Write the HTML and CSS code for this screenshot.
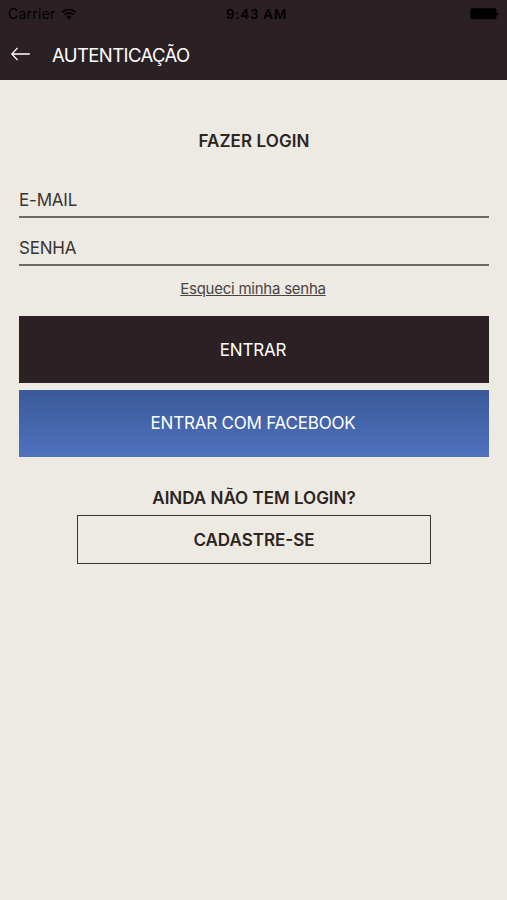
FILE: index.html
```html
<!DOCTYPE html>
<html lang="pt-BR">
<head>
    <meta charset="UTF-8">
    <meta name="viewport" content="width=device-width, initial-scale=1.0">
    <title>Autenticação</title>
    <link rel="stylesheet" href="styles.css">
</head>
<body>
    <header>
        <div class="status-bar">
            <div class="carrier">
                <span>Carrier</span>
                <svg class="wifi" width="16" height="12" viewBox="0 0 16 12">
                    <path d="M1.2 4.2a9.8 9.8 0 0 1 13.6 0M3.5 6.7a6.4 6.4 0 0 1 9 0" fill="none" stroke="#000" stroke-width="1.6"/>
                    <path d="M5.5 8.8a3.6 3.6 0 0 1 5 0L8 11.4z" fill="#000"/>
                </svg>
            </div>
            <span class="clock">9:43 AM</span>
            <svg class="battery" width="30" height="12" viewBox="0 0 30 12">
                <rect x="1.3" y="0.3" width="26.2" height="11" rx="1.8"/>
                <path d="M28.2 4.2q1.5 .6 1.5 1.7t-1.5 1.7z"/>
            </svg>
        </div>
        <div class="nav-bar">
            <a class="back" href="#" aria-label="Voltar">
                <svg width="20" height="14" viewBox="0 0 20 14">
                    <path d="M7.6 .9L1.8 7l5.8 6.1M1.8 7h18" fill="none" stroke="#fff" stroke-width="1.3"/>
                </svg>
            </a>
            <h1>AUTENTICAÇÃO</h1>
        </div>
    </header>
    <main class="container">
        <h2>FAZER LOGIN</h2>
        <form id="loginForm">
            <input type="email" id="email" placeholder="E-MAIL" aria-label="E-mail">
            <input type="password" id="senha" placeholder="SENHA" aria-label="Senha">
            <a class="forgot" href="#">Esqueci minha senha</a>
            <button type="button" class="btn btn-login">ENTRAR</button>
            <button type="button" class="btn btn-facebook">ENTRAR COM FACEBOOK</button>
        </form>
        <section class="register">
            <p>AINDA NÃO TEM LOGIN?</p>
            <button type="button" class="btn-register">CADASTRE-SE</button>
        </section>
    </main>
</body>
</html>
```

FILE: styles.css
```css
* {
    box-sizing: border-box;
}

body {
    font-family: Inter, "Liberation Sans", sans-serif;
    margin: 0;
    min-height: 100vh;
    background-color: #edeae3;
    color: #2b2422;
}

header {
    height: 80px;
    background-color: #2b2124;
    color: #ffffff;
}

.status-bar {
    display: grid;
    grid-template-columns: 1fr auto 1fr;
    align-items: center;
    height: 27px;
    padding: 0 8px;
    color: #000000;
    font-size: 14px;
}

.carrier {
    display: flex;
    align-items: center;
    gap: 5px;
    letter-spacing: 0.25px;
}

.clock {
    padding-left: 6px;
    font-size: 13.5px;
    font-weight: 600;
    letter-spacing: 0.7px;
}

.battery {
    justify-self: end;
}

.nav-bar {
    display: flex;
    align-items: center;
    height: 54px;
    padding-left: 10px;
}

.back {
    display: flex;
    width: 42px;
}

h1 {
    margin: 1px 0 0;
    font-size: 18.5px;
    font-weight: 400;
    letter-spacing: -0.6px;
}

.container {
    padding: 51px 18px 0 19px;
}

h2 {
    margin: 0 0 35px;
    font-size: 17px;
    font-weight: 600;
    line-height: 20px;
    letter-spacing: 0.1px;
    text-align: center;
}

form {
    display: flex;
    flex-direction: column;
}

input {
    height: 48px;
    padding: 14px 0 0;
    border: 0;
    border-bottom: 2px solid #6f6a65;
    border-radius: 0;
    background: none;
    font: inherit;
    font-size: 17px;
    letter-spacing: -0.2px;
}

#email {
    height: 32px;
    padding: 0 0 2px;
}

input::placeholder {
    color: #3a3431;
    opacity: 1;
}

.forgot {
    align-self: center;
    margin: 13px 2px 18px 0;
    color: #4a4441;
    font-size: 15px;
    line-height: 19px;
    letter-spacing: -0.24px;
    text-underline-offset: 1px;
}

.btn {
    height: 67px;
    padding: 0 2px 0 0;
    border: 0;
    color: #ffffff;
    font: inherit;
    font-size: 17px;
    letter-spacing: -0.2px;
}

.btn-login {
    margin-bottom: 7px;
    background-color: #2b2124;
}

.btn-facebook {
    padding-bottom: 2px;
    background-image: linear-gradient(#3b5998, #4f72bf);
}

.register {
    width: 354px;
    margin: 31px auto 0;
    text-align: center;
}

.register p {
    margin: 0 0 7px;
    font-size: 17px;
    font-weight: 600;
    line-height: 20px;
}

.btn-register {
    width: 100%;
    height: 49px;
    border: 1px solid #3a3431;
    background: none;
    color: inherit;
    font: inherit;
    font-size: 17px;
    font-weight: 600;
}
```
